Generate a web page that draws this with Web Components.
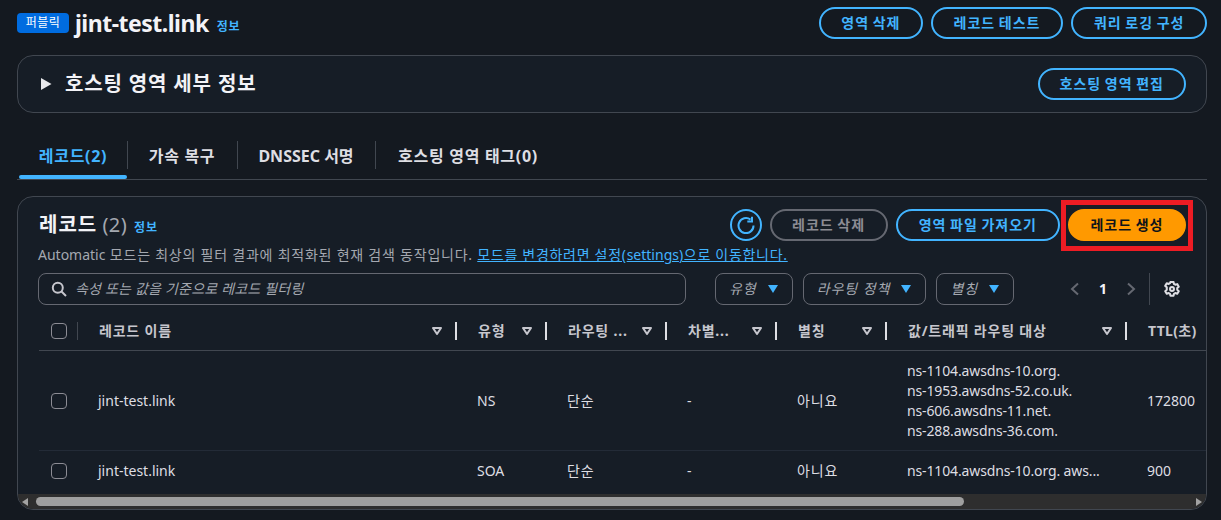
<!DOCTYPE html>
<html lang="ko">
<head>
<meta charset="utf-8">
<title>jint-test.link</title>
<style>
    html, body{
        margin:0;
        height:100%;
        overflow:hidden;
        background:#141920;
        color:#d1d5db;
        font-family:"Noto Sans","Noto Sans CJK KR",sans-serif;
        font-size:14px;
    }
</style>
</head>
<body>
<zone-page></zone-page>
<script>
const FONT = '"Noto Sans","Noto Sans CJK KR",sans-serif';

class AwsButton extends HTMLElement{
    constructor(){
        super();
        this.attachShadow({mode: "open"});
        this.shadowRoot.innerHTML = `
        <style>
            :host{ display:inline-block; }
            button{
                display:block;
                box-sizing:border-box;
                height:32px;
                padding:0 var(--btn-pad, 20px);
                border:2px solid #42b4ff;
                border-radius:16px;
                background:transparent;
                color:#42b4ff;
                font:700 14px/1 ${FONT};
                letter-spacing:1px;
                word-spacing:-1px;
                white-space:nowrap;
            }
            :host([variant="primary"]) button{
                background:#ff9900;
                border-color:#ff9900;
                color:#0f141a;
            }
            :host([disabled]) button{
                border-color:#656871;
                color:#8c8c94;
            }
        </style>
        <button><slot></slot></button>
        `;
    }
}
customElements.define('aws-button', AwsButton);

class InfoLink extends HTMLElement{
    constructor(){
        super();
        this.attachShadow({mode: "open"});
        this.shadowRoot.innerHTML = `
        <style>
            :host{
                display:inline-block;
                color:#42b4ff;
                font:700 12px/16px ${FONT};
                letter-spacing:.8px;
            }
        </style>
        <slot></slot>
        `;
    }
}
customElements.define('info-link', InfoLink);

class AwsCheckbox extends HTMLElement{
    constructor(){
        super();
        this.attachShadow({mode: "open"});
        this.shadowRoot.innerHTML = `
        <style>
            :host{
                display:block;
                box-sizing:border-box;
                width:16px;
                height:16px;
                border:1px solid #8c8c94;
                border-radius:4px;
            }
        </style>
        `;
    }
}
customElements.define('aws-checkbox', AwsCheckbox);

class FilterSelect extends HTMLElement{
    constructor(){
        super();
        this.attachShadow({mode: "open"});
        this.shadowRoot.innerHTML = `
        <style>
            :host{
                display:flex;
                align-items:center;
                gap:11px;
                box-sizing:border-box;
                height:32px;
                padding:0 14px 0 13px;
                border:1px solid #656871;
                border-radius:8px;
                color:#a4a8b0;
                font:italic 400 14px/1 ${FONT};
                letter-spacing:.95px;
            }
            svg{ display:block; }
        </style>
        <slot></slot>
        <svg width="10" height="8" viewBox="0 0 10 8"><path d="M0 0h10L5 8z" fill="#42b4ff"/></svg>
        `;
    }
}
customElements.define('filter-select', FilterSelect);

class ZoneHeader extends HTMLElement{
    constructor(){
        super();
        this.attachShadow({mode: "open"});
        this.shadowRoot.innerHTML = `
        <style>
            :host{
                display:flex;
                align-items:center;
                height:30px;
            }
            .badge{
                box-sizing:border-box;
                width:52px;
                height:20px;
                margin-right:6px;
                border-radius:4px;
                background:#006ce0;
                color:#fff;
                font:400 12px/20px ${FONT};
                letter-spacing:.4px;
                text-align:center;
            }
            h1{
                margin:0 8px 0 0;
                color:#f3f3f7;
                font:700 23px/30px ${FONT};
                letter-spacing:-.5px;
            }
            info-link{ margin-top:8px; }
            .actions{
                margin-left:auto;
                display:flex;
                gap:8px;
            }
        </style>
        <div class="badge">퍼블릭</div>
        <h1>jint-test.link</h1>
        <info-link>정보</info-link>
        <div class="actions">
            <aws-button>영역 삭제</aws-button>
            <aws-button style="--btn-pad:21px">레코드 테스트</aws-button>
            <aws-button style="--btn-pad:20.5px">쿼리 로깅 구성</aws-button>
        </div>
        `;
    }
}
customElements.define('zone-header', ZoneHeader);

class ZoneDetails extends HTMLElement{
    constructor(){
        super();
        this.attachShadow({mode: "open"});
        this.shadowRoot.innerHTML = `
        <style>
            :host{
                display:flex;
                align-items:center;
                box-sizing:border-box;
                height:58px;
                padding:0 20px 0 23px;
                border:1px solid #414750;
                border-radius:16px;
                background:#161d26;
            }
            svg{ display:block; margin-right:13px; }
            h2{
                margin:0;
                color:#f3f3f7;
                font:700 20px/24px ${FONT};
                letter-spacing:.85px;
            }
            aws-button{ margin-left:auto; }
        </style>
        <svg width="11" height="12" viewBox="0 0 11 12"><path d="M0 0 10.5 6 0 12z" fill="#e8e9ec"/></svg>
        <h2>호스팅 영역 세부 정보</h2>
        <aws-button>호스팅 영역 편집</aws-button>
        `;
    }
}
customElements.define('zone-details', ZoneDetails);

class ZoneTabs extends HTMLElement{
    constructor(){
        super();
        this.attachShadow({mode: "open"});
        this.shadowRoot.innerHTML = `
        <style>
            :host{
                display:flex;
                align-items:flex-start;
                box-sizing:border-box;
                height:49px;
                padding-left:2px;
                border-bottom:1px solid #414750;
                color:#dedee3;
                font:700 16px/20px ${FONT};
            }
            .tab{
                position:relative;
                box-sizing:border-box;
                height:48px;
                padding:15px 0 0;
                text-align:center;
                white-space:nowrap;
            }
            .tab + .tab::before{
                content:"";
                position:absolute;
                left:0;
                top:10px;
                height:28px;
                width:1px;
                background:#414750;
            }
            .tab.on{ color:#42b4ff; }
            .tab.on::after{
                content:"";
                position:absolute;
                left:0;
                right:0;
                bottom:0;
                height:4px;
                border-radius:2px;
                background:#42b4ff;
            }
            .ko{ letter-spacing:.7px; }
        </style>
        <div class="tab on ko" style="width:108px">레코드(2)</div>
        <div class="tab ko" style="width:110px">가속 복구</div>
        <div class="tab" style="width:138px">DNSSEC 서명</div>
        <div class="tab ko" style="width:186px">호스팅 영역 태그(0)</div>
        `;
    }
}
customElements.define('zone-tabs', ZoneTabs);

class RecordTable extends HTMLElement{
    constructor(){
        super();
        this.attachShadow({mode: "open"});
        const sortIcon = `<svg class="sort" width="10" height="8" viewBox="0 0 10 8"><path d="M1 1h8L5 7z" fill="none" stroke="#c6c6cd" stroke-width="2" stroke-linejoin="round"/></svg>`;
        const cols = [['레코드 이름', 379], ['유형', 90], ['라우팅 ...', 120], ['차별...', 110], ['별칭', 110], ['값/트래픽 라우팅 대상', 240], ['TTL(초)', 80]];
        const heads = cols.map((c, i) => `
            <div class="th" style="width:${c[1]}px">
                <span class="${i < 6 ? 'ko' : ''}">${c[0]}</span>
                ${i < 6 ? sortIcon + '<i class="sep"></i>' : ''}
            </div>`).join('');
        const widths = cols.map(c => c[1]);
        const row = (cls, values) => `
            <div class="tr ${cls}">
                <div class="check"><aws-checkbox></aws-checkbox></div>
                ${values.map((v, i) => `<div class="td" style="width:${widths[i]}px">${v}</div>`).join('')}
            </div>`;
        this.shadowRoot.innerHTML = `
        <style>
            :host{
                display:block;
                font:400 14px/20px ${FONT};
                color:#dedee3;
            }
            .head, .tr{
                display:flex;
                box-sizing:border-box;
                width:1180px;
                margin-left:21px;
                align-items:center;
            }
            .head{
                height:40px;
                border-bottom:1px solid #414750;
                color:#c6c6cd;
                font-weight:700;
                letter-spacing:.3px;
            }
            .head .ko{ letter-spacing:.8px; }
            .check{
                box-sizing:border-box;
                width:39px;
                padding-left:12px;
                flex:none;
                position:relative;
            }
            .head .check::after{
                content:"";
                position:absolute;
                right:0;
                top:-1px;
                height:18px;
                width:1px;
                background:#414750;
            }
            .th, .td{
                box-sizing:border-box;
                flex:none;
                position:relative;
            }
            .th{
                height:20px;
                padding-left:21px;
                white-space:nowrap;
            }
            .td{ padding-left:20px; }
            .sort{
                position:absolute;
                right:15px;
                top:6px;
            }
            .sep{
                position:absolute;
                right:0;
                top:1px;
                width:2px;
                height:18px;
                background:#dedee3;
            }
            .tr + .tr{ border-top:1px solid #232b37; }
            .tall{ height:99px; }
            .short{ height:40px; }
            .tr.short .td{ white-space:nowrap; }
            .tr .ko{ letter-spacing:.9px; }
            .tr .val{ letter-spacing:-.13px; }
        </style>
        <div class="head">
            <div class="check"><aws-checkbox></aws-checkbox></div>
            ${heads}
        </div>
        <div class="body">
            ${row('tall', ['jint-test.link', 'NS', '<span class="ko">단순</span>', '-', '<span class="ko">아니요</span>', '<span class="val">ns-1104.awsdns-10.org.<br>ns-1953.awsdns-52.co.uk.<br>ns-606.awsdns-11.net.<br>ns-288.awsdns-36.com.</span>', '172800'])}
            ${row('short', ['jint-test.link', 'SOA', '<span class="ko">단순</span>', '-', '<span class="ko">아니요</span>', '<span class="val">ns-1104.awsdns-10.org. aws...</span>', '900'])}
        </div>
        `;
    }
}
customElements.define('record-table', RecordTable);

class RecordPanel extends HTMLElement{
    constructor(){
        super();
        this.attachShadow({mode: "open"});
        this.shadowRoot.innerHTML = `
        <style>
            :host{
                display:block;
                position:relative;
                box-sizing:border-box;
                height:314px;
                border:1px solid #414750;
                border-radius:16px;
                background:#161d26;
                overflow:hidden;
                --btn-pad:20.5px;
            }
            .top{
                display:flex;
                align-items:center;
                height:32px;
                margin:12px 20px 0 21px;
            }
            h2{
                margin:0 7px 0 0;
                color:#f3f3f7;
                font:700 20px/24px ${FONT};
                letter-spacing:1px;
                word-spacing:-1px;
            }
            h2 span{
                color:#a4a8b0;
                font-weight:400;
                letter-spacing:.4px;
            }
            .top info-link{ margin-top:5px; }
            .actions{
                margin-left:auto;
                display:flex;
                align-items:center;
                gap:8px;
            }
            .refresh{
                box-sizing:border-box;
                width:32px;
                height:32px;
                border:2px solid #42b4ff;
                border-radius:50%;
                display:flex;
                align-items:center;
                justify-content:center;
            }
            .refresh svg{ display:block; margin-left:1px; }
            .mark{
                position:relative;
            }
            .mark::after{
                content:"";
                position:absolute;
                inset:-9px -7px -10px;
                border:5px solid #ed1c24;
            }
            .desc{
                margin:4px 20px 0;
                height:20px;
                color:#a4a8b0;
                font:400 14px/20px ${FONT};
                letter-spacing:.77px;
                white-space:nowrap;
            }
            .desc .en{ letter-spacing:0; }
            .desc a{
                color:#42b4ff;
                letter-spacing:.7px;
                text-decoration:underline;
            }
            .filters{
                display:flex;
                align-items:center;
                height:32px;
                margin:8px 20px 0;
            }
            .search{
                display:flex;
                align-items:center;
                gap:8px;
                box-sizing:border-box;
                width:648px;
                height:32px;
                padding:0 12px;
                border:1px solid #656871;
                border-radius:8px;
                color:#a4a8b0;
                font:italic 400 14px/1 ${FONT};
                letter-spacing:.2px;
                margin-right:29px;
            }
            .search svg{ display:block; flex:none; }
            filter-select + filter-select{ margin-left:10px; }
            .pager{
                margin-left:auto;
                margin-right:6px;
                display:flex;
                align-items:center;
                height:32px;
            }
            .pager svg{ display:block; }
            .num{
                width:46px;
                text-align:center;
                color:#f3f3f7;
                font:700 14px/20px ${FONT};
            }
            .divider{
                width:1px;
                height:32px;
                margin:0 14px 0 13px;
                background:#414750;
            }
            record-table{ margin-top:6px; }
            .scroll{
                position:absolute;
                left:0;
                right:0;
                bottom:0;
                height:15px;
                display:flex;
                align-items:center;
                background:#2e2e2e;
            }
            .scroll .thumb{
                position:absolute;
                left:18px;
                width:928px;
                height:9px;
                border-radius:5px;
                background:#9f9f9f;
            }
            .scroll .left, .scroll .right{
                position:absolute;
                width:0;
                height:0;
                border-top:4px solid transparent;
                border-bottom:4px solid transparent;
            }
            .scroll .left{ left:4px; border-right:6px solid #a3a3a3; }
            .scroll .right{ right:4px; border-left:6px solid #a3a3a3; }
        </style>
        <div class="top">
            <h2>레코드 <span>(2)</span></h2>
            <info-link>정보</info-link>
            <div class="actions">
                <div class="refresh">
                    <svg width="18" height="18" viewBox="0 0 18 18" fill="none" stroke="#42b4ff" stroke-width="2"><path d="M16.5 9.5A7.5 7.5 0 1 1 13.5 3.6"/><path d="M15 .8v4.7h-4.7"/></svg>
                </div>
                <aws-button disabled>레코드 삭제</aws-button>
                <aws-button style="--btn-pad:21px">영역 파일 가져오기</aws-button>
                <div class="mark"><aws-button variant="primary">레코드 생성</aws-button></div>
            </div>
        </div>
        <div class="desc"><span class="en">Automatic</span> 모드는 최상의 필터 결과에 최적화된 현재 검색 동작입니다. <a>모드를 변경하려면 설정(<span class="en">settings</span>)으로 이동합니다.</a></div>
        <div class="filters">
            <div class="search">
                <svg width="16" height="16" viewBox="0 0 16 16" fill="none" stroke="#c6c6cd" stroke-width="2"><circle cx="6.8" cy="6.8" r="5"/><path d="M10.5 10.5 15 15"/></svg>
                속성 또는 값을 기준으로 레코드 필터링
            </div>
            <filter-select>유형</filter-select>
            <filter-select>라우팅 정책</filter-select>
            <filter-select>별칭</filter-select>
            <div class="pager">
                <svg width="10" height="14" viewBox="0 0 10 14" fill="none" stroke="#656871" stroke-width="2"><path d="M8 1.5 2 7l6 5.5"/></svg>
                <div class="num">1</div>
                <svg width="10" height="14" viewBox="0 0 10 14" fill="none" stroke="#656871" stroke-width="2"><path d="M2 1.5 8 7l-6 5.5"/></svg>
                <div class="divider"></div>
                <svg width="16" height="16" viewBox="0 0 18 18" fill="none" stroke="#dedee3" stroke-width="2.3" stroke-linejoin="round"><path d="M7.3 2h3.4l.5 2.2 1.5.9 2.2-.7 1.7 2.9-1.7 1.6v1.8l1.7 1.6-1.7 2.9-2.2-.7-1.5.9-.5 2.2H7.3l-.5-2.2-1.5-.9-2.2.7-1.7-2.9 1.7-1.6V8l-1.7-1.6 1.7-2.9 2.2.7 1.5-.9z" transform="translate(0 -.9)"/><circle cx="9" cy="9" r="2.2"/></svg>
            </div>
        </div>
        <record-table></record-table>
        <div class="scroll"><i class="left"></i><i class="thumb"></i><i class="right"></i></div>
        `;
    }
}
customElements.define('record-panel', RecordPanel);

class ZonePage extends HTMLElement{
    constructor(){
        super();
        this.attachShadow({mode: "open"});
        this.shadowRoot.innerHTML = `
        <style>
            :host{
                display:block;
                box-sizing:border-box;
                width:1221px;
                padding:8px 14px 0 17px;
            }
            zone-details{ margin-top:17px; }
            zone-tabs{ margin-top:18px; }
            record-panel{ margin-top:16px; }
        </style>
        <zone-header></zone-header>
        <zone-details></zone-details>
        <zone-tabs></zone-tabs>
        <record-panel></record-panel>
        `;
    }
}
customElements.define('zone-page', ZonePage);
</script>
</body>
</html>
